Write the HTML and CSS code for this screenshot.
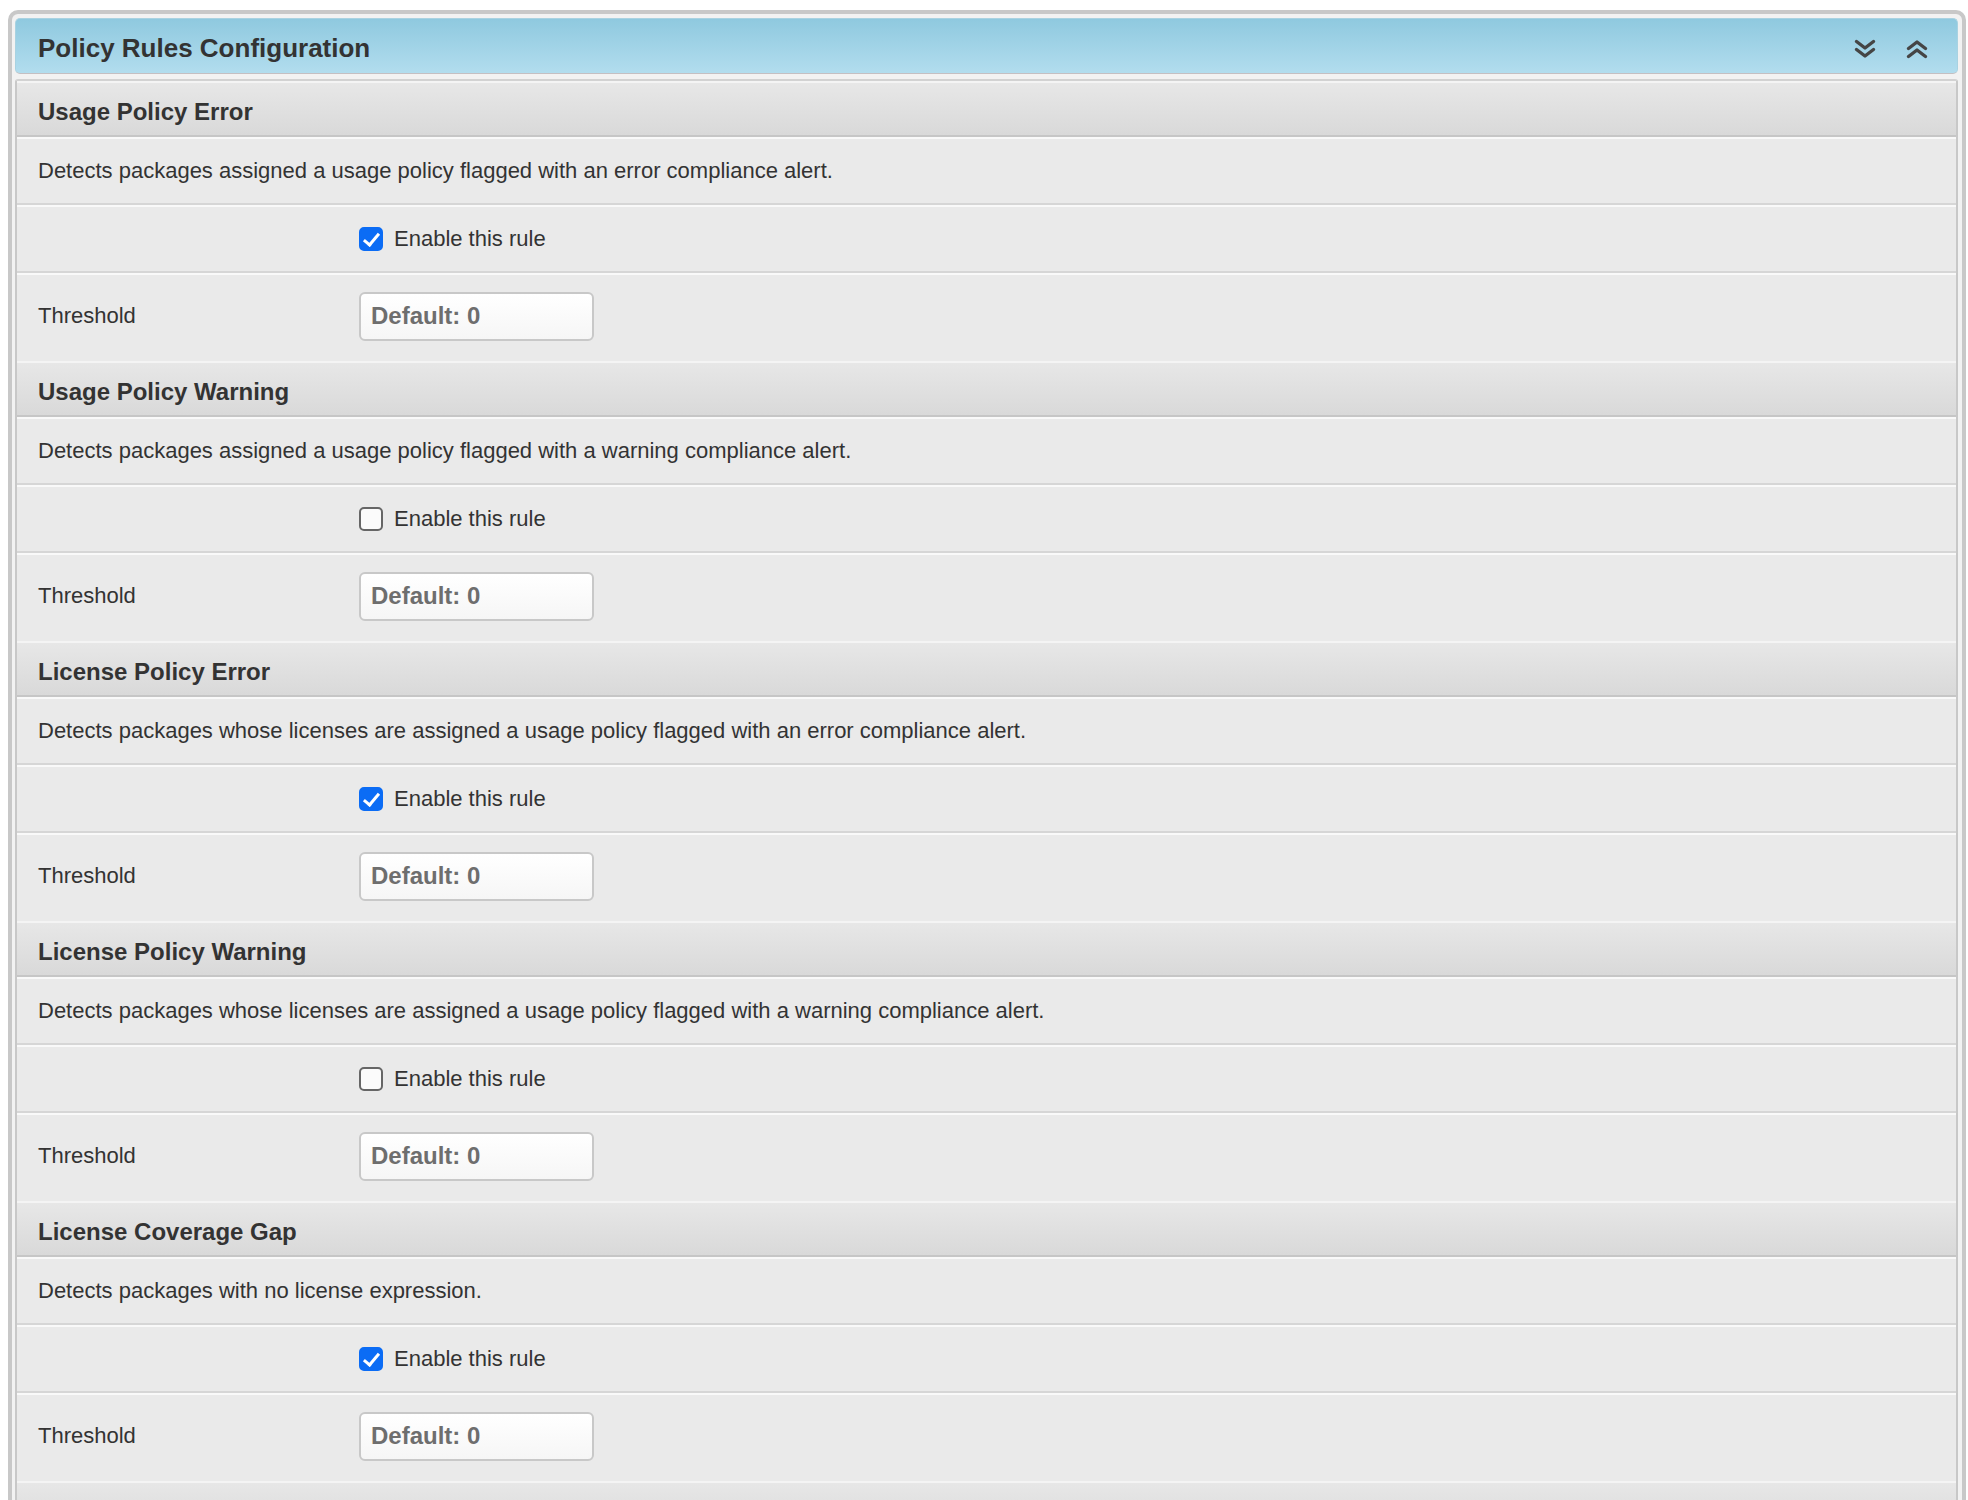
FILE: index.html
```html
<!DOCTYPE html>
<html lang="en">

<head>
    <meta charset="UTF-8">
    <meta name="viewport" content="width=device-width, initial-scale=1.0">
    <title>Policy Rules Configuration</title>
    <link rel="stylesheet" href="styles.css">
</head>

<body>
    <div class="panel">
        <div class="panel-header">
            <p class="panel-title">Policy Rules Configuration</p>
            <div class="panel-tools">
                <svg class="tool-icon" viewBox="0 0 22 20" width="22" height="20">
                    <polyline points="2.5,2.5 11,9 19.5,2.5" />
                    <polyline points="2.5,10.5 11,17 19.5,10.5" />
                </svg>
                <svg class="tool-icon" viewBox="0 0 22 20" width="22" height="20">
                    <polyline points="2.5,9.5 11,3 19.5,9.5" />
                    <polyline points="2.5,17.5 11,11 19.5,17.5" />
                </svg>
            </div>
        </div>

        <div class="panel-body">
            <div class="rule">
                <div class="rule-header">Usage Policy Error</div>
                <div class="row row-desc">Detects packages assigned a usage policy flagged with an error compliance alert.</div>
                <div class="row row-field">
                    <span></span>
                    <label class="check"><input type="checkbox" checked> Enable this rule</label>
                </div>
                <div class="row row-threshold">
                    <label for="t1">Threshold</label>
                    <input type="text" id="t1" class="input" placeholder="Default: 0">
                </div>
            </div>

            <div class="rule">
                <div class="rule-header">Usage Policy Warning</div>
                <div class="row row-desc">Detects packages assigned a usage policy flagged with a warning compliance alert.</div>
                <div class="row row-field">
                    <span></span>
                    <label class="check"><input type="checkbox"> Enable this rule</label>
                </div>
                <div class="row row-threshold">
                    <label for="t2">Threshold</label>
                    <input type="text" id="t2" class="input" placeholder="Default: 0">
                </div>
            </div>

            <div class="rule">
                <div class="rule-header">License Policy Error</div>
                <div class="row row-desc">Detects packages whose licenses are assigned a usage policy flagged with an error compliance alert.</div>
                <div class="row row-field">
                    <span></span>
                    <label class="check"><input type="checkbox" checked> Enable this rule</label>
                </div>
                <div class="row row-threshold">
                    <label for="t3">Threshold</label>
                    <input type="text" id="t3" class="input" placeholder="Default: 0">
                </div>
            </div>

            <div class="rule">
                <div class="rule-header">License Policy Warning</div>
                <div class="row row-desc">Detects packages whose licenses are assigned a usage policy flagged with a warning compliance alert.</div>
                <div class="row row-field">
                    <span></span>
                    <label class="check"><input type="checkbox"> Enable this rule</label>
                </div>
                <div class="row row-threshold">
                    <label for="t4">Threshold</label>
                    <input type="text" id="t4" class="input" placeholder="Default: 0">
                </div>
            </div>

            <div class="rule">
                <div class="rule-header">License Coverage Gap</div>
                <div class="row row-desc">Detects packages with no license expression.</div>
                <div class="row row-field">
                    <span></span>
                    <label class="check"><input type="checkbox" checked> Enable this rule</label>
                </div>
                <div class="row row-threshold">
                    <label for="t5">Threshold</label>
                    <input type="text" id="t5" class="input" placeholder="Default: 0">
                </div>
            </div>

            <div class="rule">
                <div class="rule-header">&nbsp;</div>
            </div>
        </div>
    </div>
</body>

</html>
```

FILE: styles.css
```css
body {
    margin: 0;
    background-color: #ffffff;
    font-family: "Liberation Sans", Arial, Helvetica, sans-serif;
    color: #333333;
}

.panel {
    margin: 10px 2px 0 8px;
    padding: 4px 4px 0 3px;
    border: 4px solid #c8c8c8;
    border-bottom: none;
    border-radius: 10px 10px 0 0;
    background-color: #f2f2f2;
}

.panel-header {
    display: flex;
    align-items: center;
    justify-content: space-between;
    height: 49px;
    padding: 5px 29px 0 22px;
    margin-bottom: 5px;
    border: 1px solid #a9d2e1;
    border-bottom-color: #c4bfc2;
    border-radius: 5px;
    background-image: linear-gradient(to bottom, #8fc9df, #b2ddee);
}

.panel-title {
    margin: 0;
    font-size: 26px;
    font-weight: bold;
    color: #333333;
}

.panel-tools {
    display: flex;
    gap: 30px;
}

.tool-icon {
    fill: none;
    stroke: #454545;
    stroke-width: 3.4;
    stroke-linecap: round;
    stroke-linejoin: round;
}

.panel-body {
    border: 2px solid #c8c8c8;
    border-top-color: #d2d2d2;
    border-bottom: none;
    border-radius: 3px 3px 0 0;
    background-color: #eaeaea;
}

.rule-header {
    display: flex;
    align-items: center;
    height: 47px;
    padding: 5px 21px 0;
    border-top: 2px solid #f4f4f4;
    border-bottom: 2px solid #c6c6c6;
    background-image: linear-gradient(to bottom, #e7e7e7, #d9d9d9);
    font-size: 24px;
    font-weight: bold;
}

.row {
    display: grid;
    grid-template-columns: 321px 1fr;
    align-items: center;
    padding: 0 21px;
    border-top: 2px solid #f9f9f9;
    border-bottom: 2px solid #d6d6d6;
    font-size: 22px;
    color: #333333;
}

.row-desc {
    display: flex;
    height: 64px;
}

.row-field {
    height: 64px;
}

.row-threshold {
    height: 82px;
    padding-bottom: 4px;
    border-bottom: none;
}

.check {
    display: flex;
    align-items: center;
    gap: 11px;
}

.check input {
    appearance: none;
    -webkit-appearance: none;
    position: relative;
    width: 24px;
    height: 24px;
    margin: 0;
    border: 2px solid #666666;
    border-radius: 5px;
    background-color: #fbfbfb;
}

.check input:checked {
    border-color: #0b6cf5;
    background-color: #0b6cf5;
}

.check input:checked::after {
    content: "";
    position: absolute;
    left: 6px;
    top: 1px;
    width: 6px;
    height: 13px;
    border: solid #ffffff;
    border-width: 0 3.5px 3.5px 0;
    transform: rotate(40deg);
}

.input {
    width: 235px;
    height: 49px;
    box-sizing: border-box;
    padding: 0 10px;
    border: 2px solid #c8c8c8;
    border-radius: 6px;
    background-image: linear-gradient(to bottom, #ffffff, #f6f6f6);
    font-family: "Liberation Sans", Arial, Helvetica, sans-serif;
    font-size: 24px;
    font-weight: bold;
    color: #444444;
}

.input::placeholder {
    color: #6e6e6e;
    font-weight: bold;
}
```
